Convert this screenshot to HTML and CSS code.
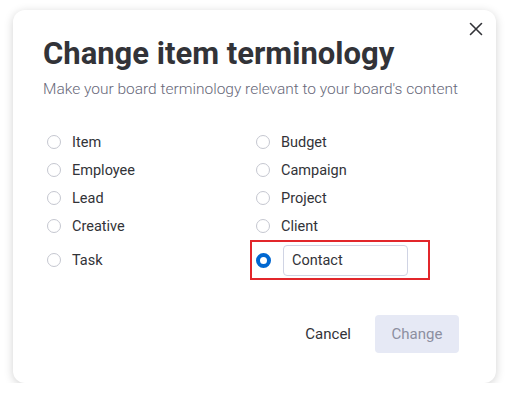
FILE: index.html
```html
<!DOCTYPE html>
<html>
<head>
<meta charset="utf-8">
<link rel="stylesheet" href="styles.css">
</head>
<body>
<div class="dialog">
  <button class="close" aria-label="Close">
    <svg width="14" height="14" viewBox="0 0 14 14"><path d="M1.5 1.5 L12.5 12.5 M12.5 1.5 L1.5 12.5" stroke="#323338" stroke-width="1.6" stroke-linecap="round"/></svg>
  </button>
  <h1 class="title">Change item terminology</h1>
  <p class="subtitle">Make your board terminology relevant to your board's content</p>
  <div class="options">
    <label class="opt"><span class="radio"></span>Item</label>
    <label class="opt"><span class="radio"></span>Budget</label>
    <label class="opt"><span class="radio"></span>Employee</label>
    <label class="opt"><span class="radio"></span>Campaign</label>
    <label class="opt"><span class="radio"></span>Lead</label>
    <label class="opt"><span class="radio"></span>Project</label>
    <label class="opt"><span class="radio"></span>Creative</label>
    <label class="opt"><span class="radio"></span>Client</label>
    <label class="opt"><span class="radio"></span>Task</label>
    <div class="opt custom"><span class="radio checked"></span><input class="field" type="text" value="Contact"></div>
  </div>
  <div class="actions">
    <button class="btn cancel">Cancel</button>
    <button class="btn primary">Change</button>
  </div>
</div>
</body>
</html>
```
FILE: styles.css
```css
* { box-sizing: border-box; }
html, body { margin: 0; padding: 0; background: #ffffff; }
body { font-family: Roboto, "Liberation Sans", sans-serif; color: #323338; }

.dialog {
  position: relative;
  margin: 10px 0 0 13px;
  width: 483px;
  height: 373px;
  background: #fff;
  border-radius: 12px;
  box-shadow: 0 2px 10px rgba(0,0,0,0.18);
  padding: 26px 37px 0 30px;
}

.close {
  position: absolute;
  top: 12px;
  right: 13px;
  width: 14px;
  height: 14px;
  padding: 0;
  border: 0;
  background: none;
  display: flex;
}

.title {
  margin: 0;
  font-size: 31px;
  line-height: 36px;
  font-weight: 700;
  color: #323338;
}

.subtitle {
  margin: 5px 0 0;
  font-size: 15.5px;
  line-height: 24px;
  font-weight: 300;
  color: #676879;
  white-space: nowrap;
}

.options {
  margin: 27px 0 0 4px;
  display: grid;
  grid-template-columns: 209px 1fr;
  grid-template-rows: repeat(4, 28px) 40px;
}

.opt {
  display: flex;
  align-items: center;
  gap: 11px;
  font-size: 14.5px;
  color: #323338;
}

.radio {
  width: 14px;
  height: 14px;
  border-radius: 50%;
  border: 1px solid #c5c7d0;
  background: #fff;
  flex: none;
}

.radio.checked {
  width: 15px;
  height: 15px;
  border: 4px solid #0067d1;
}

.custom {
  margin-left: -6px;
  width: 180px;
  border: 2px solid #e2262b;
  padding-left: 4px;
  gap: 12px;
}

.field {
  width: 125px;
  height: 31px;
  border: 1px solid #d0d4e4;
  border-radius: 4px;
  padding: 0 8px;
  font-family: inherit;
  font-size: 14.5px;
  color: #323338;
  outline: none;
}

.actions {
  margin-top: 35px;
  display: flex;
  justify-content: flex-end;
  gap: 8px;
}

.btn {
  height: 38px;
  border: 0;
  border-radius: 4px;
  font-family: inherit;
  font-size: 15px;
  padding: 0 16px;
  background: none;
}

.cancel { color: #323338; }

.primary {
  width: 84px;
  background: #e6e9f5;
  color: #8c8fa0;
}
```
